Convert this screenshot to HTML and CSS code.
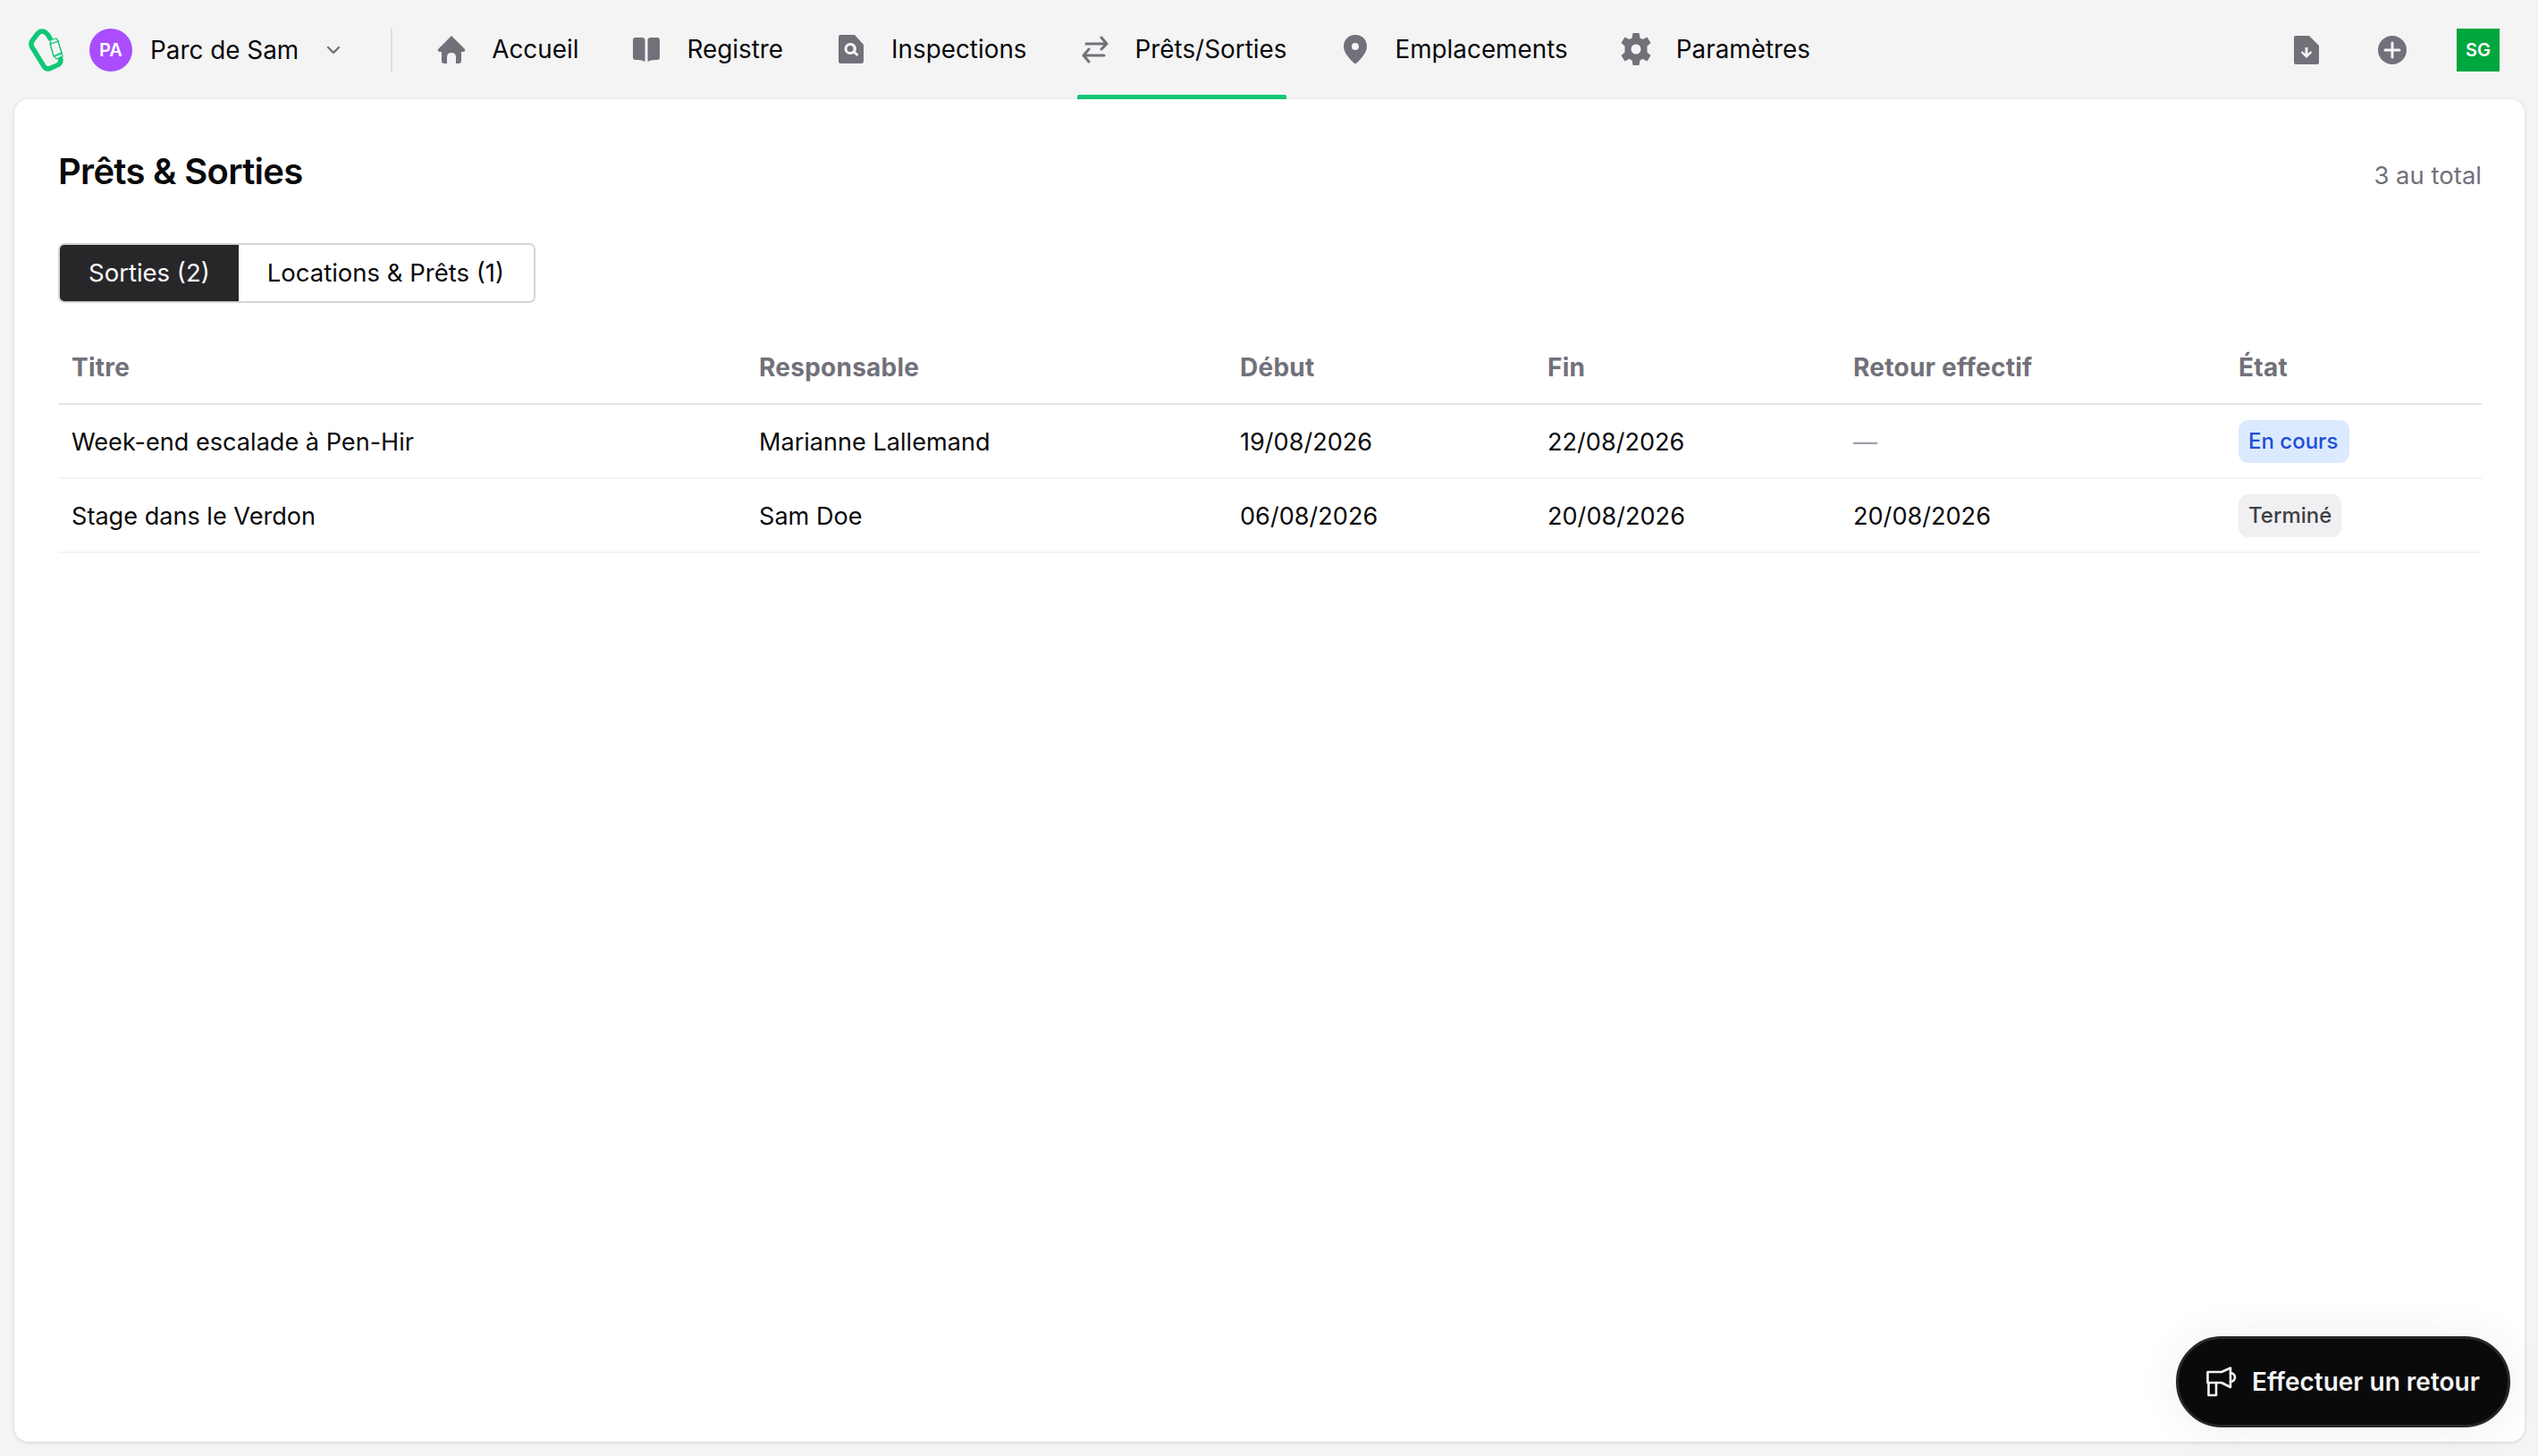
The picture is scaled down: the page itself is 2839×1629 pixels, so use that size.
FILE: index.html
```html
<!DOCTYPE html>
<html lang="fr">
<head>
  <meta charset="UTF-8" />
  <title>Prêts &amp; Sorties</title>
  <link rel="stylesheet" href="styles.css">
</head>
<body>

<header class="topbar">
  <svg class="logo" viewBox="0 0 39 48" fill="none">
    <path d="M24 11 Q20 3 15 3 Q12 3 9 7 L4.500 13 Q1.500 17 4 21 L17 42 Q19 46 24 44.500 L32 41 Q37 39 35.500 33 L34 29" stroke="#10c876" stroke-width="5.500" stroke-linecap="round"/>
    <path d="M24 17 L33 14 L37 27 L28 31 Z" fill="#f4f4f4" stroke="#10c876" stroke-width="1.500"/>
    <path d="M24 13 L31 11 L33 14 L25 17 Z M29 31 L37 28 L38 31 L31 34 Z" fill="#f4f4f4" stroke="#10c876" stroke-width="1.300"/>
  </svg>
  <span class="avatar-parc">PA</span>
  <span class="parc-nom">Parc de Sam</span>
  <svg class="chevron" viewBox="0 0 16 10" fill="none"><path d="M2 2 L8 8 L14 2" stroke="#71717a" stroke-width="2.400" stroke-linecap="round" stroke-linejoin="round"/></svg>
  <span class="separateur"></span>

  <nav class="menu">
    <a class="menu-item">
      <svg class="ico" viewBox="0 0 32 32"><path fill="#71717a" d="M16 1 L31 16 Q32 19 29 19 L27 19 L27 29 Q27 32 24 32 L21 32 L21 25 Q21 20 16 20 Q11 20 11 25 L11 32 L8 32 Q5 32 5 29 L5 19 L3 19 Q0 19 1 16 Z"/></svg>
      <span>Accueil</span>
    </a>
    <a class="menu-item">
      <svg class="ico" viewBox="0 0 32 32"><path fill="#71717a" d="M1 6 Q1 3 4 3 L11 3 Q14 3 14.500 5 L14.500 30 Q11 27.500 4 28 Q1 28 1 25 Z M31 6 Q31 3 28 3 L21 3 Q18 3 17.500 5 L17.500 30 Q21 27.500 28 28 Q31 28 31 25 Z"/></svg>
      <span>Registre</span>
    </a>
    <a class="menu-item">
      <svg class="ico" viewBox="0 0 32 32"><path fill="#71717a" fill-rule="evenodd" d="M4 0 L20 0 L30 11 L30 29 Q30 32 27 32 L4 32 Q2 32 2 29 L2 3 Q2 0 4 0 Z M15 9 A6.500 6.500 0 1 0 15 22 A6.500 6.500 0 0 0 19 20.700 L22.500 24 L24.500 22 L21 18.700 A6.500 6.500 0 0 0 15 9 Z M15 12 A3.500 3.500 0 1 1 15 19 A3.500 3.500 0 0 1 15 12 Z"/></svg>
      <span>Inspections</span>
    </a>
    <a class="menu-item actif">
      <svg class="ico" viewBox="0 0 32 32" fill="none" stroke="#71717a" stroke-width="3" stroke-linecap="round" stroke-linejoin="round"><path d="M6 10 L29 10 M23 3 L29 10 L23 16"/><path d="M26 23 L3 23 M9 16 L3 23 L9 30"/></svg>
      <span>Prêts/Sorties</span>
    </a>
    <a class="menu-item">
      <svg class="ico" viewBox="0 0 32 32"><path fill="#71717a" fill-rule="evenodd" d="M17 0 C25 0 30 6 30 13 C30 21 21 29 17 33 C13 29 4 21 4 13 C4 6 9 0 17 0 Z M17 9 A4 4 0 1 0 17 17 A4 4 0 0 0 17 9 Z"/></svg>
      <span>Emplacements</span>
    </a>
    <a class="menu-item">
      <svg class="ico ico-grand" viewBox="0 0 36 36"><path fill="#71717a" fill-rule="evenodd" d="M14.500 0 L21.500 0 L22.500 5.500 L25.500 7 L30.500 4.500 L34.500 11 L30.500 14.500 L30.500 21.500 L34.500 25 L30.500 31.500 L25.500 29 L22.500 30.500 L21.500 36 L14.500 36 L13.500 30.500 L10.500 29 L5.500 31.500 L1.500 25 L5.500 21.500 L5.500 14.500 L1.500 11 L5.500 4.500 L10.500 7 L13.500 5.500 Z M18 12.500 A5.500 5.500 0 1 0 18 23.500 A5.500 5.500 0 0 0 18 12.500 Z"/></svg>
      <span>Paramètres</span>
    </a>
  </nav>

  <div class="actions">
    <svg class="ico-doc" viewBox="0 0 28 32"><path fill="#71717a" fill-rule="evenodd" d="M2 0 L17 0 L28 11 L28 30 Q28 32 26 32 L2 32 Q0 32 0 30 L0 2 Q0 0 2 0 Z M12.500 13 L12.500 20 L9 17 L8 19 L14 25 L20 19 L19 17 L15.500 20 L15.500 13 Z"/></svg>
    <svg class="ico-plus" viewBox="0 0 32 32"><circle cx="16" cy="16" r="16" fill="#71717a"/><path d="M16 8 L16 24 M8 16 L24 16" stroke="#f4f4f4" stroke-width="3" stroke-linecap="round"/></svg>
    <span class="avatar-user">SG</span>
  </div>
</header>

<main class="carte">
  <div class="entete">
    <h1>Prêts &amp; Sorties</h1>
    <span class="total">3 au total</span>
  </div>

  <div class="onglets">
    <button type="button" class="onglet onglet-actif">Sorties (2)</button>
    <button type="button" class="onglet">Locations &amp; Prêts (1)</button>
  </div>

  <table class="tableau">
    <colgroup>
      <col class="col-titre">
      <col class="col-resp">
      <col class="col-debut">
      <col class="col-fin">
      <col class="col-retour">
      <col class="col-etat">
    </colgroup>
    <thead>
      <tr>
        <th>Titre</th>
        <th>Responsable</th>
        <th>Début</th>
        <th>Fin</th>
        <th>Retour effectif</th>
        <th>État</th>
      </tr>
    </thead>
    <tbody>
      <tr>
        <td>Week-end escalade à Pen-Hir</td>
        <td>Marianne Lallemand</td>
        <td>19/08/2026</td>
        <td>22/08/2026</td>
        <td class="vide">—</td>
        <td><span class="badge badge-cours">En cours</span></td>
      </tr>
      <tr>
        <td>Stage dans le Verdon</td>
        <td>Sam Doe</td>
        <td>06/08/2026</td>
        <td>20/08/2026</td>
        <td>20/08/2026</td>
        <td><span class="badge badge-fini">Terminé</span></td>
      </tr>
    </tbody>
  </table>

  <button type="button" class="retour">
    <svg class="ico-retour" viewBox="0 0 34 34" fill="none" stroke="#f4f4f5" stroke-width="2.600" stroke-linejoin="round" stroke-linecap="round"><path d="M1.500 6 L17 6 L27 1.500 L27 23 L17 18 L1.500 18 Z"/><path d="M27 7 Q32 8 32 12 Q32 16 27 17"/><path d="M2.500 18 L2.500 32 L11 32 L11 18"/></svg>
    <span>Effectuer un retour</span>
  </button>
</main>

</body>
</html>
```

FILE: styles.css
```css
* { box-sizing: border-box; }
html, body { height: 100%; }
body {
  margin: 0;
  background: #f4f4f4;
  font-family: Inter, "Liberation Sans", sans-serif;
  font-size: 28px;
  color: #09090b;
  display: flex;
  flex-direction: column;
  overflow: hidden;
}

/* barre du haut */
.topbar {
  height: 111px;
  flex: none;
  display: flex;
  align-items: center;
  padding: 0 43px 0 32px;
  font-size: 27.850px;
}
.logo { width: 39px; height: 48px; flex: none; }
.avatar-parc {
  width: 48px;
  height: 48px;
  margin-left: 29px;
  border-radius: 50%;
  background: #a94dff;
  color: #fff;
  font-size: 20px;
  font-weight: 600;
  display: flex;
  align-items: center;
  justify-content: center;
}
.parc-nom { margin-left: 20px; }
.chevron { width: 16px; height: 10px; margin-left: 31px; }
.separateur {
  width: 2px;
  height: 48px;
  margin-left: 56px;
  background: #dcdcdc;
}
.menu {
  display: flex;
  align-self: stretch;
  gap: 60px;
  margin-left: 50px;
}
.menu-item {
  position: relative;
  display: flex;
  align-items: center;
  gap: 29px;
  padding-bottom: 1px;
}
.menu-item.actif::after {
  content: "";
  position: absolute;
  left: -4px;
  right: 0;
  bottom: 0;
  height: 5px;
  border-radius: 2px 2px 0 0;
  background: #10c876;
}
.ico { width: 32px; height: 32px; flex: none; }
.ico-grand { width: 36px; height: 36px; margin: 0 -2px; }
.actions {
  margin-left: auto;
  display: flex;
  align-items: center;
}
.ico-doc { width: 28px; height: 32px; }
.ico-plus { width: 32px; height: 32px; margin-left: 66px; }
.avatar-user {
  width: 48px;
  height: 48px;
  margin-left: 56px;
  background: #00a63e;
  color: #fff;
  font-size: 20px;
  font-weight: 600;
  display: flex;
  align-items: center;
  justify-content: center;
}

/* carte */
.carte {
  position: relative;
  flex: 1;
  margin: 0 15px 16px 16px;
  padding: 0 48px 0 49px;
  background: #fff;
  border-radius: 16px;
  box-shadow: 0 1px 4px rgba(0, 0, 0, 0.14);
}
.entete {
  height: 161px;
  display: flex;
  align-items: center;
  justify-content: space-between;
}
h1 {
  margin: 0;
  font-size: 40px;
  font-weight: 600;
  letter-spacing: -0.7px;
  color: #09090b;
}
.total { font-size: 27.500px; color: #71717a; position: relative; top: 4px; }

.onglets {
  display: inline-flex;
  height: 67px;
  border: 2px solid #d4d4d8;
  border-radius: 7px;
  overflow: hidden;
  vertical-align: top;
}
.onglet {
  border: none;
  background: #fff;
  color: #09090b;
  font: inherit;
  font-size: 27.500px;
  padding: 0 33px 2px 32px;
}
.onglet-actif {
  background: #27272a;
  color: #fff;
  padding: 0 32px 2px;
}

.tableau {
  width: 2711px;
  margin-top: 30px;
  table-layout: fixed;
  border-collapse: collapse;
}
.col-titre { width: 769px; }
.col-resp { width: 538px; }
.col-debut { width: 344px; }
.col-fin { width: 342px; }
.col-retour { width: 431px; }
.col-etat { width: 287px; }
th, td { padding: 0 0 0 15px; text-align: left; }
th {
  height: 83px;
  padding-top: 2px;
  font-weight: 700;
  letter-spacing: 0.25px;
  color: #71717a;
  border-bottom: 2px solid #e4e4e7;
}
td {
  height: 83px;
  padding-top: 2px;
  font-size: 27.100px;
  border-bottom: 2px solid #f4f4f5;
}
td.vide { color: #a1a1aa; }
.badge {
  display: inline-block;
  height: 48px;
  line-height: 48px;
  padding: 0 11px;
  border-radius: 11px;
  font-size: 24px;
  font-weight: 500;
  vertical-align: middle;
  position: relative;
  top: -1px;
}
.badge-cours { background: #dbeafe; color: #1d4ed8; padding-right: 13px; }
.badge-fini { background: #f0f0f2; color: #3f3f46; }

/* bouton flottant */
.retour {
  position: absolute;
  right: 16px;
  bottom: 16px;
  width: 374px;
  height: 102px;
  display: flex;
  align-items: center;
  gap: 17px;
  padding: 0 0 0 31px;
  background: #0a0a0c;
  border: 3px solid #27272a;
  border-radius: 51px;
  color: #f4f4f5;
  font-family: Inter, "Liberation Sans", sans-serif;
  font-size: 28px;
  font-weight: 600;
  box-shadow: 0 0 50px rgba(0, 0, 0, 0.07);
}
.ico-retour { width: 34px; height: 34px; flex: none; }
```
